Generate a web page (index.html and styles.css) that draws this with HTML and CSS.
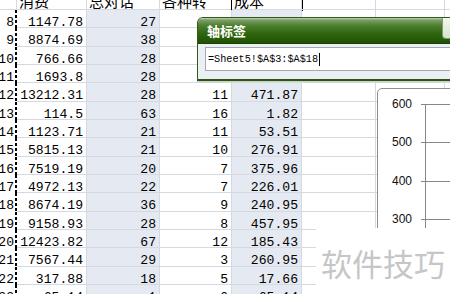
FILE: index.html
```html
<!DOCTYPE html>
<html lang="zh">
<head>
<meta charset="utf-8">
<link rel="stylesheet" href="styles.css">
</head>
<body>
<div class="sheet">
  <div class="c h"></div><div class="c h">消费</div><div class="c h">总对话</div><div class="c h">各种转</div><div class="c h active">成本</div><div class="c h"></div><div class="c h"></div><div class="c h"></div>

  <div class="c rn">8</div><div class="c n">1147.78</div><div class="c n hl">27</div><div class="c n">7</div><div class="c n hl">163.97</div><div class="c"></div><div class="c"></div><div class="c"></div>
  <div class="c rn">9</div><div class="c n">8874.69</div><div class="c n hl">38</div><div class="c n">8</div><div class="c n hl">1109.34</div><div class="c"></div><div class="c"></div><div class="c"></div>
  <div class="c rn">10</div><div class="c n">766.66</div><div class="c n hl">28</div><div class="c n">8</div><div class="c n hl">95.83</div><div class="c"></div><div class="c"></div><div class="c"></div>
  <div class="c rn">11</div><div class="c n">1693.8</div><div class="c n hl">28</div><div class="c n">9</div><div class="c n hl">188.2</div><div class="c"></div><div class="c"></div><div class="c"></div>
  <div class="c rn">12</div><div class="c n">13212.31</div><div class="c n hl">28</div><div class="c n">11</div><div class="c n hl">471.87</div><div class="c"></div><div class="c"></div><div class="c"></div>
  <div class="c rn">13</div><div class="c n">114.5</div><div class="c n hl">63</div><div class="c n">16</div><div class="c n hl">1.82</div><div class="c"></div><div class="c"></div><div class="c"></div>
  <div class="c rn">14</div><div class="c n">1123.71</div><div class="c n hl">21</div><div class="c n">11</div><div class="c n hl">53.51</div><div class="c"></div><div class="c"></div><div class="c"></div>
  <div class="c rn">15</div><div class="c n">5815.13</div><div class="c n hl">21</div><div class="c n">10</div><div class="c n hl">276.91</div><div class="c"></div><div class="c"></div><div class="c"></div>
  <div class="c rn">16</div><div class="c n">7519.19</div><div class="c n hl">20</div><div class="c n">7</div><div class="c n hl">375.96</div><div class="c"></div><div class="c"></div><div class="c"></div>
  <div class="c rn">17</div><div class="c n">4972.13</div><div class="c n hl">22</div><div class="c n">7</div><div class="c n hl">226.01</div><div class="c"></div><div class="c"></div><div class="c"></div>
  <div class="c rn">18</div><div class="c n">8674.19</div><div class="c n hl">36</div><div class="c n">9</div><div class="c n hl">240.95</div><div class="c"></div><div class="c"></div><div class="c"></div>
  <div class="c rn">19</div><div class="c n">9158.93</div><div class="c n hl">28</div><div class="c n">8</div><div class="c n hl">457.95</div><div class="c"></div><div class="c"></div><div class="c"></div>
  <div class="c rn">20</div><div class="c n">12423.82</div><div class="c n hl">67</div><div class="c n">12</div><div class="c n hl">185.43</div><div class="c"></div><div class="c"></div><div class="c"></div>
  <div class="c rn">21</div><div class="c n">7567.44</div><div class="c n hl">29</div><div class="c n">3</div><div class="c n hl">260.95</div><div class="c"></div><div class="c"></div><div class="c"></div>
  <div class="c rn">22</div><div class="c n">317.88</div><div class="c n hl">18</div><div class="c n">5</div><div class="c n hl">17.66</div><div class="c"></div><div class="c"></div><div class="c"></div>
  <div class="c rn">23</div><div class="c n">65.14</div><div class="c n hl">1</div><div class="c n">0</div><div class="c n hl">65.14</div><div class="c"></div><div class="c"></div><div class="c"></div>
</div>

<div class="chart">
  <div class="labels">
    <div class="lbl">600</div>
    <div class="lbl">500</div>
    <div class="lbl">400</div>
    <div class="lbl">300</div>
  </div>
  <div class="plot">
    <div class="gl"></div>
    <div class="gl"></div>
    <div class="gl"></div>
    <div class="gl"></div>
    <div class="gl"></div>
  </div>
</div>

<div class="dialog">
  <div class="titlebar"><span class="title">轴标签</span><span class="close"></span></div>
  <div class="dlg-body">
    <div class="input">=Sheet5!$A$3:$A$18<span class="caret"></span></div>
  </div>
</div>

<div class="watermark">软件技巧</div>
</body>
</html>
```

FILE: styles.css
```css
html, body {
  margin: 0;
  padding: 0;
}
body {
  width: 450px;
  height: 294px;
  overflow: hidden;
  position: relative;
  background: #fff;
  font-family: "Liberation Mono", monospace;
}

.sheet {
  display: grid;
  grid-template-columns: 17px 70px 73px 72px 70px 74px 69px 20px;
  grid-auto-rows: 18.33px;
  margin-top: -8.33px;
}

.c {
  box-sizing: border-box;
  border-right: 1px solid #d5d9e1;
  border-bottom: 1px solid #d5d9e1;
  font-size: 13.1px;
  line-height: 14px;
  padding-top: 6px;
  color: #000;
  white-space: nowrap;
}

.h {
  font-family: "Noto Sans CJK SC", sans-serif;
  font-size: 15px;
  line-height: 15px;
  padding: 1px 0 0 2px;
}

.active {
  outline: 1px solid #000;
}

.n, .rn {
  text-align: right;
  padding-right: 3px;
}

.rn {
  direction: rtl;
  border-right: none;
  border-bottom: none;
  background: repeating-linear-gradient(to bottom, #000 0 3px, #fff 3px 5px) right top / 2px 100% no-repeat;
}

.hl {
  background: #e5e9f1;
}

/* chart */
.chart {
  position: absolute;
  left: 377px;
  top: 88px;
  width: 100px;
  height: 220px;
  box-sizing: border-box;
  border: 1px solid #8e8e8e;
  border-radius: 5px 0 0 0;
  background: #fff;
  padding-top: 15px;
  display: flex;
}
.labels {
  width: 34px;
  margin-top: -7px;
  font-family: "Liberation Sans", sans-serif;
  font-size: 12px;
  color: #111;
}
.lbl {
  height: 38.33px;
  line-height: 14px;
  text-align: right;
}
.plot {
  flex: 1;
  margin-left: 9px;
  background: linear-gradient(#868686, #868686) 4px 0 / 1px 100% no-repeat;
}
.gl {
  height: 38.33px;
  box-sizing: border-box;
  border-top: 1px solid #868686;
}

/* dialog */
.dialog {
  position: absolute;
  left: 197px;
  top: 17px;
  width: 270px;
  height: 64px;
  box-sizing: border-box;
  border: 1px solid #2f5a17;
  border-bottom: 2px solid #2a5512;
  border-radius: 6px 6px 0 0;
  background: #edf0f2;
  display: flex;
  flex-direction: column;
  box-shadow: 0 1px 0 #c9d2c4;
}
.titlebar {
  height: 26px;
  flex: none;
  display: flex;
  align-items: center;
  padding-left: 9px;
  border-radius: 5px 5px 0 0;
  background: linear-gradient(#c5d2bd 0, #7e9f68 8%, #4c7f2e 30%, #2f660f 62%, #1f5303 100%);
  border-bottom: 1px solid #1b3f07;
  box-sizing: border-box;
}
.title {
  color: #fff;
  font-family: "Noto Sans CJK SC", sans-serif;
  font-weight: bold;
  font-size: 13px;
  line-height: 16px;
}
.close {
  margin-left: auto;
  margin-right: 4px;
  align-self: flex-start;
  width: 20px;
  height: 21px;
  box-sizing: border-box;
  border: 1px solid #7d9b74;
  border-top: none;
  border-radius: 0 0 4px 4px;
  background: linear-gradient(#f3f7f1, #d3e3cd);
}
.dlg-body {
  flex: 1;
  padding: 3px 0 0 7px;
}
.input {
  height: 24px;
  box-sizing: border-box;
  background: #fff;
  border: 1px solid #a3aab3;
  padding-left: 2px;
  font-family: "Liberation Mono", monospace;
  font-size: 10.2px;
  color: #000;
  display: flex;
  align-items: center;
}
.caret {
  width: 1px;
  height: 13px;
  background: #000;
  margin-left: 1px;
}

/* watermark */
.watermark {
  position: absolute;
  left: 316px;
  top: 228px;
  right: 0;
  bottom: 0;
  background: #fff;
  display: flex;
  align-items: center;
  justify-content: center;
  font-family: "Noto Sans CJK SC", sans-serif;
  font-size: 31px;
  color: #c6c6c6;
  padding-top: 2px;
}
```
